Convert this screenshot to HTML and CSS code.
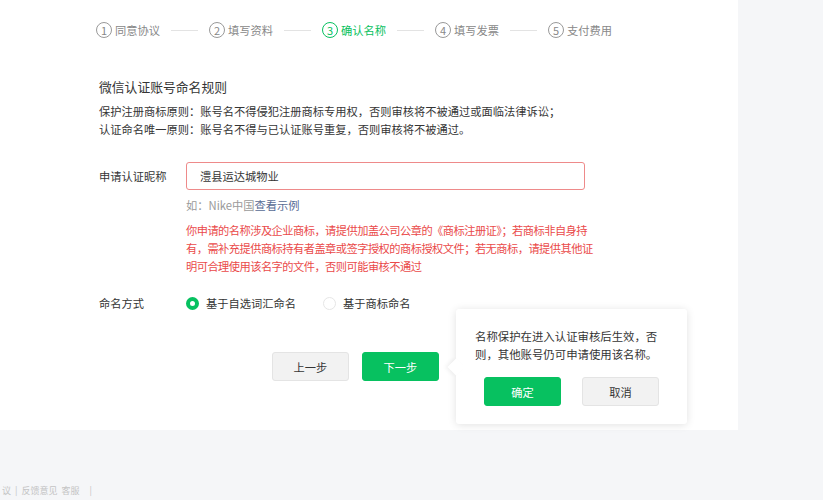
FILE: index.html
```
<!DOCTYPE html>
<html lang="zh-CN">
<head>
    <meta charset="UTF-8">
    <title>确认名称</title>
    <link rel="stylesheet" href="styles.css">
</head>
<body>
    <div class="panel">
        <!-- 步骤条 -->
        <div class="steps">
            <div class="step"><span class="num">1</span>同意协议</div>
            <span class="step-line"></span>
            <div class="step"><span class="num">2</span>填写资料</div>
            <span class="step-line"></span>
            <div class="step active"><span class="num">3</span>确认名称</div>
            <span class="step-line"></span>
            <div class="step"><span class="num">4</span>填写发票</div>
            <span class="step-line"></span>
            <div class="step"><span class="num">5</span>支付费用</div>
        </div>

        <div class="content">
            <h2 class="title">微信认证账号命名规则</h2>
            <p class="rule">保护注册商标原则：账号名不得侵犯注册商标专用权，否则审核将不被通过或面临法律诉讼；</p>
            <p class="rule">认证命名唯一原则：账号名不得与已认证账号重复，否则审核将不被通过。</p>

            <div class="form-row">
                <label class="label">申请认证昵称</label>
                <div class="field">
                    <div class="input">澧县运达城物业</div>
                    <p class="hint">如：Nike中国<a class="link">查看示例</a></p>
                    <p class="warn">你申请的名称涉及企业商标，请提供加盖公司公章的《商标注册证》；若商标非自身持<br>有，需补充提供商标持有者盖章或签字授权的商标授权文件；若无商标，请提供其他证<br>明可合理使用该名字的文件，否则可能审核不通过</p>
                </div>
            </div>

            <div class="form-row radio-row">
                <label class="label">命名方式</label>
                <div class="radios">
                    <span class="radio checked"><i></i>基于自选词汇命名</span>
                    <span class="radio"><i></i>基于商标命名</span>
                </div>
            </div>

            <div class="actions">
                <button class="btn btn-default">上一步</button>
                <button class="btn btn-primary">下一步</button>
            </div>
        </div>

        <!-- 确认弹层 -->
        <div class="popover">
            <p class="pop-text">名称保护在进入认证审核后生效，否<br>则，其他账号仍可申请使用该名称。</p>
            <div class="pop-actions">
                <button class="btn btn-primary">确定</button>
                <button class="btn btn-default">取消</button>
            </div>
        </div>
    </div>

    <div class="footer">议 &nbsp;|&nbsp; 反馈意见 &nbsp;客服 &nbsp; &nbsp; |</div>
</body>
</html>
```

FILE: styles.css
```
body {
    font-family: "Noto Sans CJK SC", "Liberation Sans", sans-serif;
    background-color: #f5f6f8;
    margin: 0;
    color: #353535;
    font-size: 11.25px;
    line-height: 18px;
}

p {
    margin: 0;
}

.panel {
    position: relative;
    width: 738px;
    height: 430px;
    background-color: #fff;
}

.steps {
    display: flex;
    align-items: center;
    gap: 11px;
    padding: 22px 0 0 96px;
    height: 16px;
}

.step {
    display: flex;
    align-items: center;
    gap: 3px;
    color: #888;
}

.step .num {
    width: 14px;
    height: 14px;
    border: 1px solid #999;
    border-radius: 50%;
    display: flex;
    align-items: center;
    justify-content: center;
    font-size: 11px;
    line-height: 14px;
}

.step.active {
    color: #07c160;
}

.step.active .num {
    border-color: #07c160;
}

.step-line {
    width: 27px;
    height: 1px;
    background-color: #e3e3e3;
}

.content {
    padding-left: 99px;
}

.title {
    margin: 40px 0 6px;
    font-size: 12.8px;
    font-weight: normal;
    line-height: 18px;
}

.form-row {
    display: flex;
    margin-top: 24px;
}

.label {
    width: 87px;
    line-height: 28px;
}

.input {
    width: 371px;
    height: 26px;
    padding: 0 13px;
    border: 1px solid #ee8a8a;
    border-radius: 3px;
    line-height: 26px;
}

.hint {
    margin-top: 6px;
    color: #9a9a9a;
}

.link {
    color: #576b95;
}

.warn {
    margin-top: 7px;
    color: #ea4a4a;
    white-space: nowrap;
    letter-spacing: -0.55px;
}

.radio-row {
    margin-top: 19px;
}

.radio-row .label {
    line-height: 18px;
}

.radios {
    display: flex;
    align-items: center;
    gap: 27px;
}

.radio {
    display: flex;
    align-items: center;
    gap: 7px;
}

.radio i {
    width: 11px;
    height: 11px;
    border: 1px solid #e6e6e6;
    border-radius: 50%;
}

.radio.checked i {
    width: 5px;
    height: 5px;
    border: 4px solid #07c160;
    background-color: #fff;
}

.actions {
    display: flex;
    gap: 13px;
    margin: 40px 0 0 173px;
}

.btn {
    width: 77px;
    height: 29px;
    border-radius: 3px;
    font-family: inherit;
    font-size: 11.25px;
    cursor: pointer;
}

.btn-default {
    background-color: #f2f2f2;
    border: 1px solid #e4e4e4;
    color: #353535;
}

.btn-primary {
    background-color: #07c160;
    border: 1px solid #07c160;
    color: #fff;
}

.popover {
    position: absolute;
    left: 456px;
    top: 309px;
    width: 231px;
    height: 115px;
    box-sizing: border-box;
    padding: 18px 0 0 19px;
    background-color: #fff;
    border-radius: 3px;
    box-shadow: 0 1px 8px rgba(0, 0, 0, 0.12);
}

.popover::before {
    content: "";
    position: absolute;
    left: -6px;
    top: 52px;
    width: 12px;
    height: 12px;
    background-color: #fff;
    transform: rotate(45deg);
    box-shadow: -2px 2px 4px rgba(0, 0, 0, 0.05);
}

.pop-text {
    position: relative;
    font-size: 11.4px;
}

.pop-actions {
    display: flex;
    gap: 21px;
    margin: 14px 0 0 9px;
}

.pop-actions .btn {
    height: 29px;
}

.footer {
    margin-top: 55px;
    padding-left: 2px;
    font-size: 9px;
    color: #c4c4c4;
    line-height: 12px;
}
```
